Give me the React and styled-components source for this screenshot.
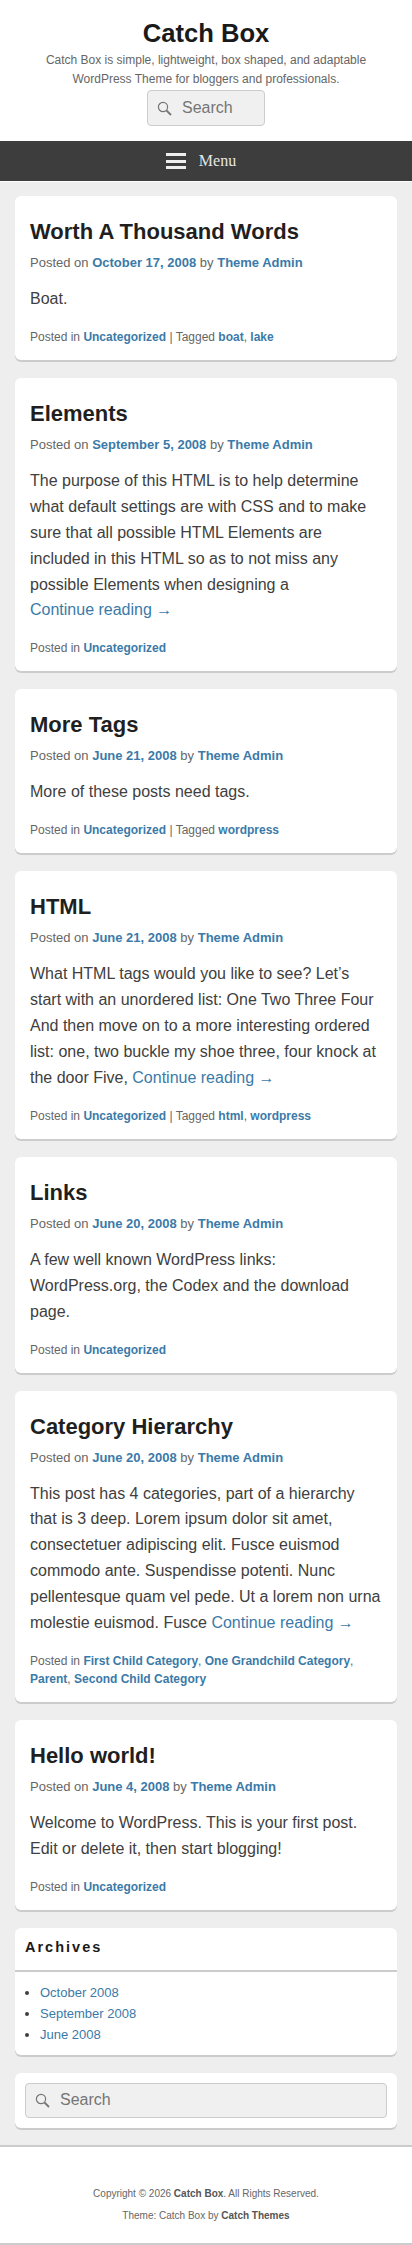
import React from "react";
import styled, { createGlobalStyle } from "styled-components";

const GlobalStyle = createGlobalStyle`
  html, body {
    margin: 0;
    padding: 0;
    background: #eee;
    font-family: "Liberation Sans", Arial, sans-serif;
    color: #404040;
  }
  * { box-sizing: border-box; }
`;

const Header = styled.header`
  background: #fff;
  padding: 15px 15px 15px;
  text-align: center;
`;

const SiteTitle = styled.h1`
  margin: 0;
  font-size: 25.6px;
  line-height: 36px;
  font-weight: bold;
  color: #1a1a1a;
`;

const Tagline = styled.p`
  margin: 0 0 1px;
  font-size: 12px;
  line-height: 19px;
  color: #666;
`;

const SearchBox = styled.div`
  display: flex;
  align-items: center;
  height: ${(p) => (p.$wide ? "35px" : "36px")};
  width: ${(p) => (p.$wide ? "100%" : "118px")};
  margin: ${(p) => (p.$wide ? "0" : "0 auto")};
  padding-left: 9px;
  gap: 10px;
  background: #f0f0f0;
  border: 1px solid #ccc;
  border-radius: 4px;
  font-size: 16px;
  color: #757575;
`;

const Nav = styled.nav`
  height: 40px;
  padding-right: 10px;
  background: #3d3d3d;
  display: flex;
  align-items: center;
  justify-content: center;
  gap: 13px;
  color: #e6e6e6;
  font-family: "Liberation Serif", serif;
  font-size: 16px;
`;

const Burger = styled.span`
  width: 20px;
  height: 16px;
  border-top: 3px solid #eee;
  border-bottom: 3px solid #eee;
  position: relative;
  &::after {
    content: "";
    position: absolute;
    left: 0;
    right: 0;
    top: 3.5px;
    height: 3px;
    background: #eee;
  }
`;

const Divider = styled.div`
  height: 1px;
  background: #fff;
`;

const Main = styled.main`
  padding: 14px 15px 17px;
  display: flex;
  flex-direction: column;
  gap: 18px;
`;

const Card = styled.article`
  background: #fff;
  border-radius: 6px;
  box-shadow: 0 2px 0 #ccc;
  padding: 21px 15px 14px;
`;

const PostTitle = styled.h2`
  margin: 0 0 6px;
  font-size: 22px;
  line-height: 30px;
  font-weight: bold;
  color: #1f1f1f;
`;

const Meta = styled.div`
  font-size: 13px;
  line-height: 20px;
  color: #666;
`;

const Bold = styled.a`
  color: #3b7aa8;
  font-weight: bold;
`;

const Body = styled.p`
  margin: 13px 0 16px;
  font-size: 16px;
  line-height: 25.9px;
  color: #404040;
`;

const More = styled.a`
  color: #3b7aa8;
  white-space: nowrap;
`;

const CardFoot = styled.div`
  font-size: 12px;
  line-height: 18px;
  color: #666;
`;

const Widget = styled.aside`
  background: #fff;
  border-radius: 6px;
  box-shadow: 0 2px 0 #ccc;
`;

const WidgetTitle = styled.h3`
  margin: 0;
  height: 44px;
  padding: 0 10px;
  font-size: 14.5px;
  line-height: 38px;
  letter-spacing: 2px;
  font-weight: bold;
  color: #1a1a1a;
  border-bottom: 2px solid #ccc;
`;

const ArchiveList = styled.ul`
  margin: 0;
  padding: 10px 15px 10px 25px;
  font-size: 13px;
  line-height: 21px;
  color: #404040;
`;

const SearchWidget = styled(Widget)`
  padding: 10px;
`;

const Footer = styled.footer`
  background: #fff;
  border-top: 2px solid #ccc;
  border-bottom: 2px solid #ccc;
  padding: 36px 15px 16px;
  text-align: center;
  font-size: 10px;
  line-height: 22px;
  color: #666;
`;

const FooterBold = styled.b`
  color: #555;
`;

const SearchIcon = () => (
  <svg width="15" height="15" viewBox="0 0 15 15" fill="none" stroke="#757575">
    <circle cx="6" cy="6" r="4.6" strokeWidth="1.2" />
    <path d="M9.5 9.5L14 14" strokeWidth="1.8" />
  </svg>
);

const posts = [
  {
    title: "Worth A Thousand Words",
    date: "October 17, 2008",
    body: "Boat.",
    tags: ["boat", "lake"],
  },
  {
    title: "Elements",
    date: "September 5, 2008",
    body: "The purpose of this HTML is to help determine what default settings are with CSS and to make sure that all possible HTML Elements are included in this HTML so as to not miss any possible Elements when designing a ",
    more: true,
  },
  {
    title: "More Tags",
    date: "June 21, 2008",
    body: "More of these posts need tags.",
    tags: ["wordpress"],
  },
  {
    title: "HTML",
    date: "June 21, 2008",
    body: "What HTML tags would you like to see? Let’s start with an unordered list: One Two Three Four And then move on to a more interesting ordered list: one, two buckle my shoe three, four knock at the door Five, ",
    more: true,
    tags: ["html", "wordpress"],
  },
  {
    title: "Links",
    date: "June 20, 2008",
    body: "A few well known WordPress links: WordPress.org, the Codex and the download page.",
  },
  {
    title: "Category Hierarchy",
    date: "June 20, 2008",
    body: "This post has 4 categories, part of a hierarchy that is 3 deep. Lorem ipsum dolor sit amet, consectetuer adipiscing elit. Fusce euismod commodo ante. Suspendisse potenti. Nunc pellentesque quam vel pede. Ut a lorem non urna molestie euismod. Fusce ",
    more: true,
    cats: ["First Child Category", "One Grandchild Category", "Parent", "Second Child Category"],
  },
  {
    title: "Hello world!",
    date: "June 4, 2008",
    body: "Welcome to WordPress. This is your first post. Edit or delete it, then start blogging!",
  },
];

const joinLinks = (items) =>
  items.map((item, i) => (
    <React.Fragment key={item}>
      {i > 0 && ", "}
      <Bold>{item}</Bold>
    </React.Fragment>
  ));

const Post = ({ title, date, body, more, tags, cats }) => (
  <Card>
    <PostTitle>{title}</PostTitle>
    <Meta>
      Posted on <Bold>{date}</Bold> by <Bold>Theme Admin</Bold>
    </Meta>
    <Body>
      {body}
      {more && <More>Continue reading →</More>}
    </Body>
    <CardFoot>
      Posted in {joinLinks(cats || ["Uncategorized"])}
      {tags && <> | Tagged {joinLinks(tags)}</>}
    </CardFoot>
  </Card>
);

export default function App() {
  return (
    <>
      <GlobalStyle />
      <Header>
        <SiteTitle>Catch Box</SiteTitle>
        <Tagline>
          Catch Box is simple, lightweight, box shaped, and adaptable
          <br />
          WordPress Theme for bloggers and professionals.
        </Tagline>
        <SearchBox>
          <SearchIcon />
          Search
        </SearchBox>
      </Header>
      <Nav>
        <Burger />
        Menu
      </Nav>
      <Divider />
      <Main>
        {posts.map((post) => (
          <Post key={post.title} {...post} />
        ))}
        <Widget>
          <WidgetTitle>Archives</WidgetTitle>
          <ArchiveList>
            <li><More>October 2008</More></li>
            <li><More>September 2008</More></li>
            <li><More>June 2008</More></li>
          </ArchiveList>
        </Widget>
        <SearchWidget>
          <SearchBox $wide>
            <SearchIcon />
            Search
          </SearchBox>
        </SearchWidget>
      </Main>
      <Footer>
        Copyright © 2026 <FooterBold>Catch Box</FooterBold>. All Rights Reserved.
        <br />
        Theme: Catch Box by <FooterBold>Catch Themes</FooterBold>
      </Footer>
    </>
  );
}
